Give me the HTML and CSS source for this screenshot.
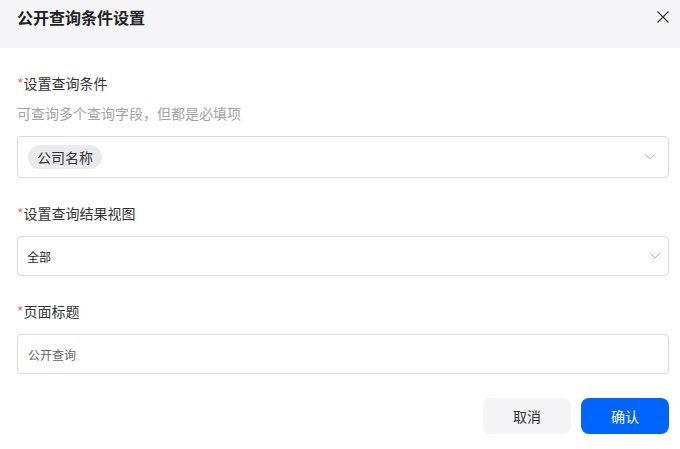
FILE: index.html
```html
<!DOCTYPE html>
<html lang="zh-CN">
<head>
  <meta charset="UTF-8" />
  <meta name="viewport" content="width=device-width, initial-scale=1.0" />
  <title>公开查询条件设置</title>
  <link rel="stylesheet" href="styles.css">
</head>
<body>
  <div class="dialog" role="dialog">
    <div class="dialog-header">
      <h2 class="dialog-title">公开查询条件设置</h2>
      <button class="close-btn" title="关闭">
        <svg width="12" height="12" viewBox="0 0 12 12" fill="none" stroke="#333" stroke-width="1.2">
          <path d="M0.5 0.5 L11.5 11.5 M11.5 0.5 L0.5 11.5" />
        </svg>
      </button>
    </div>

    <div class="dialog-body">
      <div class="field">
        <div class="field-label"><span class="required">*</span>设置查询条件</div>
        <div class="field-hint">可查询多个查询字段，但都是必填项</div>
        <div class="select select-tags">
          <span class="tag">公司名称</span>
          <svg class="arrow" width="10" height="6" viewBox="0 0 10 6" fill="none" stroke="#bbb" stroke-width="1">
            <path d="M0.5 0.5 L5 5 L9.5 0.5" />
          </svg>
        </div>
      </div>

      <div class="field">
        <div class="field-label"><span class="required">*</span>设置查询结果视图</div>
        <div class="select">
          <span class="select-value">全部</span>
          <svg class="arrow arrow-narrow" width="10" height="6" viewBox="0 0 10 6" fill="none" stroke="#bbb" stroke-width="1">
            <path d="M0.5 0.5 L5 5 L9.5 0.5" />
          </svg>
        </div>
      </div>

      <div class="field">
        <div class="field-label"><span class="required">*</span>页面标题</div>
        <input class="text-input" type="text" value="公开查询" />
      </div>
    </div>

    <div class="dialog-footer">
      <button class="btn btn-cancel">取消</button>
      <button class="btn btn-primary">确认</button>
    </div>
  </div>
</body>
</html>
```

FILE: styles.css
```css
:root {
  --header-bg: #f5f5f7;
  --text-color: #333;
  --hint-color: #a3a3a3;
  --border-color: #dcdcdf;
  --tag-bg: #ebebef;
  --primary: #0064ff;
  --danger: #f56c6c;
}

* {
  box-sizing: border-box;
}

body {
  margin: 0;
  padding: 0;
  background: #fff;
  color: var(--text-color);
  font-family: "Noto Sans CJK SC", "Noto Sans", sans-serif;
  font-size: 14px;
}

.dialog {
  width: 680px;
}

.dialog-header {
  height: 48px;
  padding: 5px 11px 0 17px;
  background-color: var(--header-bg);
  display: flex;
  justify-content: space-between;
  align-items: flex-start;
}

.dialog-title {
  margin: 0;
  font-size: 16px;
  font-weight: bold;
  line-height: 24px;
  color: #222;
}

.close-btn {
  margin-top: 6px;
  padding: 0;
  width: 12px;
  height: 12px;
  border: none;
  background: transparent;
  cursor: pointer;
  display: flex;
}

.dialog-body {
  padding: 25px 11px 0 17px;
  display: flex;
  flex-direction: column;
  gap: 25px;
}

.field-label {
  line-height: 20px;
  margin-bottom: 13px;
}

.required {
  color: var(--danger);
}

.field-hint {
  color: var(--hint-color);
  line-height: 20px;
  margin-top: -3px;
  margin-bottom: 13px;
}

.select,
.text-input {
  width: 100%;
  height: 40px;
  border: 1px solid var(--border-color);
  border-radius: 4px;
  background: #fff;
}

.select {
  display: flex;
  align-items: center;
  justify-content: space-between;
  padding: 0 8px 0 9px;
}

.select-tags {
  height: 42px;
  padding-left: 10px;
  padding-right: 13px;
}

.tag {
  height: 24px;
  line-height: 24px;
  padding: 0 9px;
  border-radius: 12px;
  background-color: var(--tag-bg);
  font-size: 14px;
  color: #333;
}

.select-value {
  font-size: 12px;
  color: #222;
}

.arrow-narrow {
  margin-right: 0;
}

.text-input {
  padding: 0 10px;
  font-family: inherit;
  font-size: 12px;
  color: #666;
  outline: none;
}

.dialog-footer {
  display: flex;
  justify-content: flex-end;
  gap: 10px;
  padding: 24px 11px 0 0;
}

.btn {
  width: 88px;
  height: 36px;
  border: none;
  border-radius: 8px;
  font-family: inherit;
  font-size: 14px;
  cursor: pointer;
}

.btn-cancel {
  background-color: #f4f4f6;
  color: #333;
}

.btn-primary {
  background-color: var(--primary);
  color: #fff;
}
```
